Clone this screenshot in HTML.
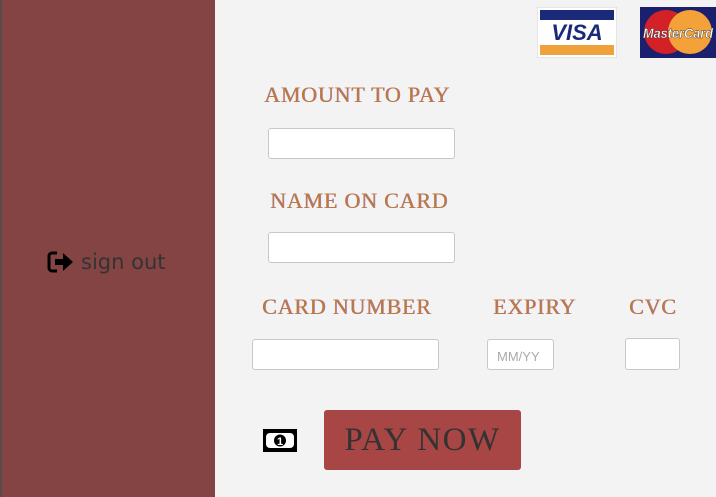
<!DOCTYPE html>
<html><head><style>
body{margin:0;width:716px;height:497px;background:#f3f3f3;position:relative;overflow:hidden;font-family:"Liberation Serif",serif}
.side{position:absolute;left:0;top:0;width:215px;height:497px;background:#854444;border-left:2px solid #5a4a4a;box-sizing:border-box}
.so{position:absolute;left:47px;top:250px;font-family:"DejaVu Sans","Liberation Sans",sans-serif;font-size:21px;color:#333;display:flex;align-items:center;gap:6px}
.lbl{position:absolute;color:#c0783a;font-size:22px;letter-spacing:0.8px;text-shadow:0.6px 0 0 #9a80d0}
.in{position:absolute;background:#fff;border:1px solid #c8c8c8;border-radius:3px;box-sizing:border-box}
.ph{font-family:"Liberation Sans",sans-serif;font-size:13px;color:#aaa;padding:9px 0 0 9px}
.btn{position:absolute;left:324px;top:410px;width:197px;height:60px;background:#a84545;border-radius:3px;color:#333;font-size:33px;text-align:center;line-height:60px;letter-spacing:1.5px}
</style></head><body>
<div class="side"></div>
<div class="so"><svg width="28" height="24" viewBox="0 0 28 24"><path d="M10 3H5a3 3 0 0 0-3 3v12a3 3 0 0 0 3 3h5" fill="none" stroke="#000" stroke-width="3"/><path d="M8 9h8V3l10 9-10 9v-6H8z" fill="#000"/></svg><span>sign out</span></div>
<svg style="position:absolute;left:537px;top:7px" width="80" height="51" viewBox="0 0 80 51"><rect width="80" height="51" fill="#fff" stroke="#ccc"/><rect x="3" y="3" width="74" height="10" fill="#1b2a78"/><rect x="3" y="38" width="74" height="10" fill="#f0a23a"/><text x="40" y="33" text-anchor="middle" font-family="Liberation Sans" font-weight="bold" font-style="italic" font-size="22" fill="#1b2a78">VISA</text></svg>
<svg style="position:absolute;left:640px;top:7px" width="76" height="51" viewBox="0 0 76 51"><rect width="76" height="51" fill="#1a1f6e"/><circle cx="26" cy="25" r="22" fill="#d42027"/><circle cx="50" cy="25" r="22" fill="#f5a13a"/><text x="38" y="31" text-anchor="middle" font-family="Liberation Sans" font-weight="bold" font-style="italic" font-size="14" textLength="70" lengthAdjust="spacingAndGlyphs" fill="#fff" stroke="#333" stroke-width="0.4">MasterCard</text></svg>
<div class="lbl" style="left:264px;top:82px">AMOUNT TO PAY</div>
<div class="in" style="left:268px;top:128px;width:187px;height:31px"></div>
<div class="lbl" style="left:270px;top:188px">NAME ON CARD</div>
<div class="in" style="left:268px;top:232px;width:187px;height:31px"></div>
<div class="lbl" style="left:262px;top:294px">CARD NUMBER</div>
<div class="lbl" style="left:493px;top:294px">EXPIRY</div>
<div class="lbl" style="left:629px;top:294px">CVC</div>
<div class="in" style="left:252px;top:339px;width:187px;height:31px"></div>
<div class="in" style="left:487px;top:339px;width:67px;height:31px"><div class="ph">MM/YY</div></div>
<div class="in" style="left:625px;top:338px;width:55px;height:32px"></div>
<svg style="position:absolute;left:263px;top:429px" width="34" height="23" viewBox="0 0 34 23"><rect width="34" height="23" fill="#000"/><rect x="3" y="4" width="28" height="15" rx="4" fill="#fff"/><ellipse cx="17" cy="11.5" rx="6" ry="6" fill="#000"/><text x="17" y="16" text-anchor="middle" font-family="Liberation Sans" font-weight="bold" font-size="11" fill="#fff">1</text></svg>
<div class="btn">PAY NOW</div>
</body></html>
